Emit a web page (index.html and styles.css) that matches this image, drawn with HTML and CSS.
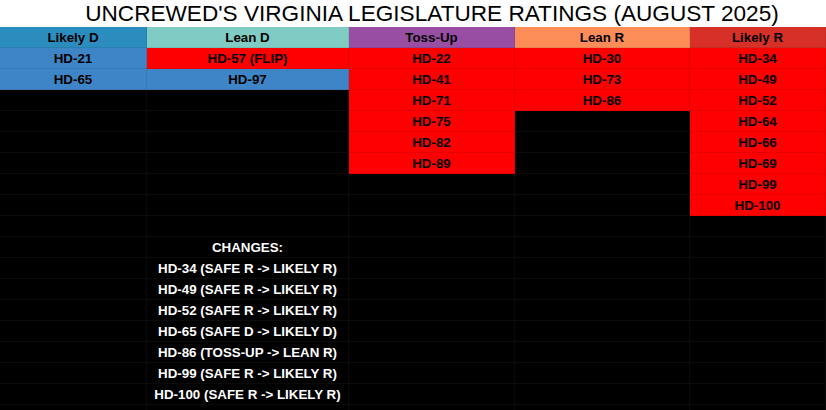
FILE: index.html
```html
<!DOCTYPE html>
<html>
<head>
<meta charset="utf-8">
<link rel="stylesheet" href="styles.css">
</head>
<body>
<div class="sheet">
  <div class="title">UNCREWED'S VIRGINIA LEGISLATURE RATINGS (AUGUST 2025)</div>
  <div class="grid">
    <div class="c h-ld">Likely D</div><div class="c h-lnd">Lean D</div><div class="c h-tu">Toss-Up</div><div class="c h-lnr">Lean R</div><div class="c h-lr">Likely R</div>

    <div class="c blue">HD-21</div><div class="c red">HD-57 (FLIP)</div><div class="c red">HD-22</div><div class="c red">HD-30</div><div class="c red">HD-34</div>
    <div class="c blue">HD-65</div><div class="c blue">HD-97</div><div class="c red">HD-41</div><div class="c red">HD-73</div><div class="c red">HD-49</div>
    <div class="c"></div><div class="c"></div><div class="c red">HD-71</div><div class="c red">HD-86</div><div class="c red">HD-52</div>
    <div class="c"></div><div class="c"></div><div class="c red">HD-75</div><div class="c"></div><div class="c red">HD-64</div>
    <div class="c"></div><div class="c"></div><div class="c red">HD-82</div><div class="c"></div><div class="c red">HD-66</div>
    <div class="c"></div><div class="c"></div><div class="c red">HD-89</div><div class="c"></div><div class="c red">HD-69</div>
    <div class="c"></div><div class="c"></div><div class="c"></div><div class="c"></div><div class="c red">HD-99</div>
    <div class="c"></div><div class="c"></div><div class="c"></div><div class="c"></div><div class="c red">HD-100</div>
    <div class="c"></div><div class="c"></div><div class="c"></div><div class="c"></div><div class="c"></div>
    <div class="c"></div><div class="c note">CHANGES:</div><div class="c"></div><div class="c"></div><div class="c"></div>
    <div class="c"></div><div class="c note">HD-34 (SAFE R -&gt; LIKELY R)</div><div class="c"></div><div class="c"></div><div class="c"></div>
    <div class="c"></div><div class="c note">HD-49 (SAFE R -&gt; LIKELY R)</div><div class="c"></div><div class="c"></div><div class="c"></div>
    <div class="c"></div><div class="c note">HD-52 (SAFE R -&gt; LIKELY R)</div><div class="c"></div><div class="c"></div><div class="c"></div>
    <div class="c"></div><div class="c note">HD-65 (SAFE D -&gt; LIKELY D)</div><div class="c"></div><div class="c"></div><div class="c"></div>
    <div class="c"></div><div class="c note">HD-86 (TOSS-UP -&gt; LEAN R)</div><div class="c"></div><div class="c"></div><div class="c"></div>
    <div class="c"></div><div class="c note">HD-99 (SAFE R -&gt; LIKELY R)</div><div class="c"></div><div class="c"></div><div class="c"></div>
    <div class="c"></div><div class="c note">HD-100 (SAFE R -&gt; LIKELY R)</div><div class="c"></div><div class="c"></div><div class="c"></div>
    <div class="c"></div><div class="c"></div><div class="c"></div><div class="c"></div><div class="c"></div>
  </div>
</div>
</body>
</html>
```
FILE: styles.css
```css
html, body {
  margin: 0;
  padding: 0;
  background: #000;
  overflow: hidden;
}
.sheet {
  width: 826px;
  height: 410px;
  overflow: hidden;
  font-family: "Liberation Sans", Arial, sans-serif;
}
.title {
  height: 27px;
  background: #fff;
  color: #000;
  font-size: 22.6px;
  line-height: 28px;
  text-align: center;
  padding-left: 38px;
  white-space: nowrap;
}
.grid {
  display: grid;
  grid-template-columns: 147px 202px 166px 175px 136px;
  grid-auto-rows: 21px;
}
.c {
  box-sizing: border-box;
  border-right: 1px solid #0b0b0b;
  border-bottom: 1px solid #0b0b0b;
  background: #000;
  color: #000;
  font-size: 13.33px;
  font-weight: bold;
  line-height: 20px;
  padding-top: 1px;
  text-align: center;
  white-space: nowrap;
}
.h-ld { background: #2b8cbe; border-color: #2a7fb0; }
.h-lnd { background: #7fccc4; border-color: #74bcb4; }
.h-tu { background: #984ea3; border-color: #8a4696; }
.h-lnr { background: #fc8d59; border-color: #e88152; }
.h-lr { background: #d73027; border-color: #c52c24; }
.blue { background: #3d85c6; border-color: #3679b5; }
.red { background: #ff0000; border-color: #e60000; }
.note { color: #fff; overflow: visible; }
```
